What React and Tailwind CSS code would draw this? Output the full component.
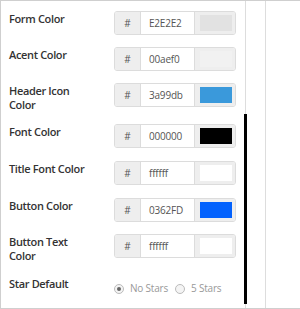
import React from "react";

const rows = [
  { label: "Form Color", value: "E2E2E2", swatch: "#e2e2e2", mb: "mb-[12px]" },
  { label: "Acent Color", value: "00aef0", swatch: "#f1f1f1", mb: "mb-[12px]" },
  { label: "Header Icon Color", value: "3a99db", swatch: "#3a99db", mb: "mb-[12px]" },
  { label: "Font Color", value: "000000", swatch: "#000000", mb: "mb-[13px]" },
  { label: "Title Font Color", value: "ffffff", swatch: "#ffffff", mb: "mb-[13px]" },
  { label: "Button Color", value: "0362FD", swatch: "#0362fd", mb: "mb-[12px]" },
  { label: "Button Text Color", value: "ffffff", swatch: "#ffffff", mb: "mb-[14px]" },
];

function Row({ r }) {
  return (
    <div className={`flex items-start ${r.mb}`}>
      <div className="w-[105px] pt-[1px] text-[11px] leading-[14px] font-semibold tracking-[-0.35px] text-[#333]">
        {r.label === "Header Icon Color" ? (
          <>Header Icon<br />Color</>
        ) : r.label === "Button Text Color" ? (
          <>Button Text<br />Color</>
        ) : (
          r.label
        )}
      </div>
      <div className="flex h-[24px] w-[122px] overflow-hidden rounded-[3px] border border-[#dcdcdc]">
        <div className="flex w-[26px] items-center justify-center border-r border-[#dcdcdc] bg-[#eeeeee] text-[10px] text-[#555]">#</div>
        <div className="flex w-[54px] items-center border-r border-[#dcdcdc] bg-white pl-[8px] text-[10px] tracking-[-0.2px] text-[#555]">{r.value}</div>
        <div className="flex flex-1 items-center bg-[#eeeeee] pl-[5px]">
          <div className="h-[16px] w-[32px]" style={{ backgroundColor: r.swatch }} />
        </div>
      </div>
    </div>
  );
}

function Radio({ checked, label }) {
  return (
    <div className="flex items-center">
      <span className="flex h-[10px] w-[10px] items-center justify-center rounded-full border border-[#bbb] bg-[#f4f4f4]">
        {checked && <span className="h-[4px] w-[4px] rounded-full bg-[#666]" />}
      </span>
      <span className="ml-[6px] text-[10px] tracking-[-0.2px] text-[#999]">{label}</span>
    </div>
  );
}

export default function App() {
  return (
    <div
      className="relative flex h-[309px] w-[300px] overflow-hidden border-y border-l border-[#cfcfcf] bg-white"
      style={{ fontFamily: '"Open Sans", "Noto Sans", sans-serif' }}
    >
      <div className="w-[245px] border-r border-[#dddddd] pl-[8px] pt-[10px]">
        {rows.map((r) => (
          <Row key={r.label} r={r} />
        ))}
        <div className="flex items-start">
          <div className="w-[105px] text-[11px] leading-[14px] font-semibold tracking-[-0.35px] text-[#333]">Star Default</div>
          <div className="flex items-center gap-[7px] pt-[4px]">
            <Radio checked label="No Stars" />
            <Radio label="5 Stars" />
          </div>
        </div>
      </div>
      <div className="w-[19px]" />
      <div className="flex-1 border-l border-[#dddddd]" />
      <div className="absolute left-[243px] top-[113px] h-[190px] w-[3px] bg-black" />
    </div>
  );
}
